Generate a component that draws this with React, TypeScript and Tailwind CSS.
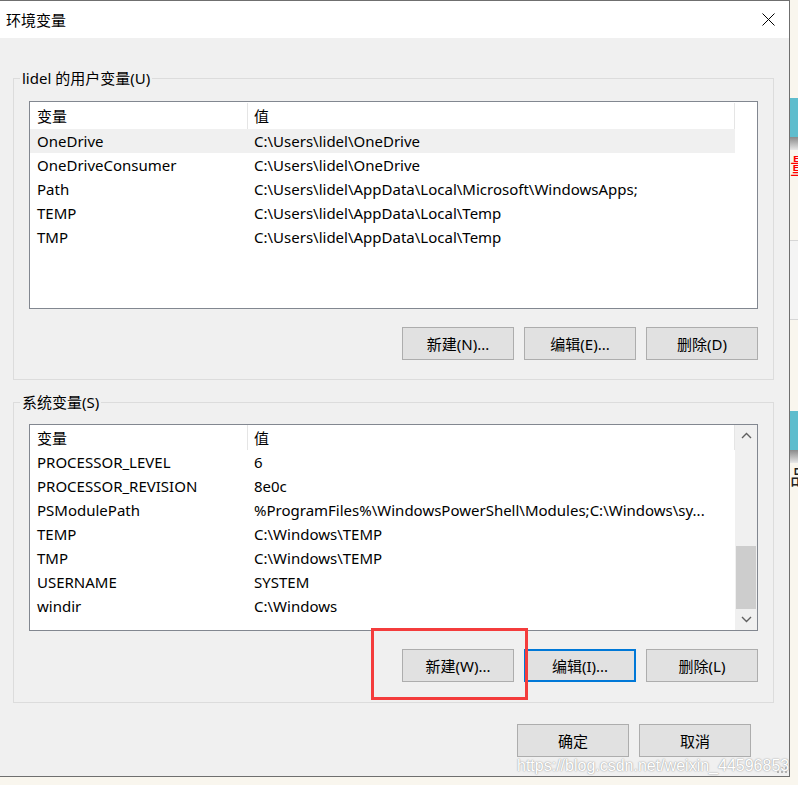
import React from "react";

const userVars = [
  ["OneDrive", "C:\\Users\\lidel\\OneDrive"],
  ["OneDriveConsumer", "C:\\Users\\lidel\\OneDrive"],
  ["Path", "C:\\Users\\lidel\\AppData\\Local\\Microsoft\\WindowsApps;"],
  ["TEMP", "C:\\Users\\lidel\\AppData\\Local\\Temp"],
  ["TMP", "C:\\Users\\lidel\\AppData\\Local\\Temp"],
];

const sysVars = [
  ["PROCESSOR_LEVEL", "6"],
  ["PROCESSOR_REVISION", "8e0c"],
  ["PSModulePath", "%ProgramFiles%\\WindowsPowerShell\\Modules;C:\\Windows\\sy..."],
  ["TEMP", "C:\\Windows\\TEMP"],
  ["TMP", "C:\\Windows\\TEMP"],
  ["USERNAME", "SYSTEM"],
  ["windir", "C:\\Windows"],
];

function Btn({ children, focused }: { children: React.ReactNode; focused?: boolean }) {
  return (
    <div
      className={`w-[112px] h-[33px] flex items-center justify-center bg-[#e1e1e1] text-[15px] leading-[20px] text-black ${
        focused ? "border-2 border-[#0078d7]" : "border border-[#adadad]"
      }`}
    >
      {children}
    </div>
  );
}

function Chevron({ up }: { up?: boolean }) {
  return (
    <svg width="11" height="7" viewBox="0 0 11 7">
      <path
        d={up ? "M1 6 L5.5 1.5 L10 6" : "M1 1 L5.5 5.5 L10 1"}
        fill="none"
        stroke="#606060"
        strokeWidth="1.4"
      />
    </svg>
  );
}

function VarList({
  rows,
  selected,
  scroll,
  height,
  headerClass,
}: {
  rows: string[][];
  selected?: number;
  scroll?: boolean;
  height: string;
  headerClass: string;
}) {
  return (
    <div className={`${height} border border-[#828790] bg-white flex overflow-hidden`}>
      <div className="w-[705px] flex flex-col">
        {/* header */}
        <div className={`flex ${headerClass}`}>
          <div className="w-[218px] pl-[7px] flex items-center border-r border-[#e5e5e5] leading-[20px]">变量</div>
          <div className="w-[487px] pl-[6px] flex items-center border-r border-[#e5e5e5] leading-[20px]">值</div>
        </div>
        {rows.map((r, i) => (
          <div
            key={r[0] + i}
            className={`h-[24px] flex items-center leading-[20px] whitespace-nowrap ${
              selected === i ? "bg-[#f0f0f0]" : ""
            }`}
          >
            <div className="w-[218px] pl-[7px] overflow-hidden">{r[0]}</div>
            <div className="w-[487px] pl-[6px] overflow-hidden">{r[1]}</div>
          </div>
        ))}
      </div>
      {scroll ? (
        <div className="w-[22px] flex flex-col bg-[#f0f0f0]">
          <div className="h-[21px] flex items-center justify-center">
            <Chevron up />
          </div>
          <div className="flex-1 flex flex-col justify-end px-px">
            <div className="h-[63px] bg-[#cdcdcd]" />
          </div>
          <div className="h-[21px] flex items-center justify-center">
            <Chevron />
          </div>
        </div>
      ) : (
        <div className="flex-1" />
      )}
    </div>
  );
}

function Group({
  label,
  className,
  children,
}: {
  label: string;
  className: string;
  children: React.ReactNode;
}) {
  return (
    <div className={`relative border border-[#dcdcdc] px-[15px] ${className}`}>
      <span className="absolute left-[6px] top-[-11px] px-[2px] bg-[#f0f0f0] leading-[20px]">{label}</span>
      {children}
    </div>
  );
}

export default function App() {
  return (
    <div className="relative w-[798px] h-[785px] overflow-hidden flex bg-[#f9f6ee] text-[15px] text-black font-['Noto_Sans','Noto_Sans_CJK_SC',sans-serif]">
      {/* dialog */}
      <div className="w-[790px] h-[777px] shrink-0 flex flex-col bg-[#f0f0f0] border-t border-r border-b border-[#6f6f6f]">
        {/* title bar */}
        <div className="h-[37px] bg-white flex items-center justify-between pl-[6px] pr-[14px]">
          <span className="leading-[20px]">环境变量</span>
          <svg width="13" height="13" viewBox="0 0 13 13">
            <path d="M0.5 0.5 L12.5 12.5 M12.5 0.5 L0.5 12.5" stroke="#000" strokeWidth="1" />
          </svg>
        </div>

        <div className="flex flex-col pl-[13px] pr-[15px] pt-[40px]">
          <Group label="lidel 的用户变量(U)" className="pt-[22px] pb-[19px]">
            <VarList rows={userVars} selected={0} height="h-[208px]" headerClass="h-[27px] pt-px" />
            <div className="mt-[18px] flex justify-end gap-[10px]">
              <Btn>新建(N)...</Btn>
              <Btn>编辑(E)...</Btn>
              <Btn>删除(D)</Btn>
            </div>
          </Group>

          <Group label="系统变量(S)" className="mt-[22px] pt-[21px] pb-[20px]">
            <VarList rows={sysVars} scroll height="h-[207px]" headerClass="h-[25px]" />
            <div className="mt-[18px] flex justify-end gap-[10px]">
              <Btn>新建(W)...</Btn>
              <Btn focused>编辑(I)...</Btn>
              <Btn>删除(L)</Btn>
            </div>
          </Group>

          <div className="mt-[21px] flex justify-end gap-[10px] pr-[23px]">
            <Btn>确定</Btn>
            <Btn>取消</Btn>
          </div>
        </div>
      </div>

      {/* strip of the window behind */}
      <div className="w-[8px] flex flex-col overflow-hidden">
        <div className="h-[98px]" />
        <div className="h-[39px] bg-[#5fbdcd]" />
        <div className="h-[13px] bg-linear-to-b from-[#8a8a8a] to-[#e8e8e8]" />
        <div className="h-[28px] overflow-hidden text-[#ff0000] text-[22px] leading-[28px] font-['Noto_Sans_CJK_SC',sans-serif]">量</div>
        <div className="h-[62px]" />
        <div className="h-px bg-[#d6d6d6]" />
        <div className="h-[78px] bg-[#f4f4f4]" />
        <div className="h-px bg-[#d6d6d6]" />
        <div className="h-[91px]" />
        <div className="h-[39px] bg-[#5fbdcd]" />
        <div className="h-[13px] bg-linear-to-b from-[#8a8a8a] to-[#e8e8e8]" />
        <div className="h-[27px] overflow-hidden text-[#222] text-[20px] leading-[27px] font-['Noto_Sans_CJK_SC',sans-serif]">品</div>
      </div>

      {/* annotation box */}
      <div className="absolute left-[371px] top-[628px] w-[157px] h-[72px] border-[3px] border-[#f43c3c]" />

      {/* resize grip */}
      <svg className="absolute left-[777px] top-[763px]" width="10" height="10" viewBox="0 0 10 10">
        <rect x="8" y="0" width="2" height="2" fill="#b4b4b4" />
        <rect x="4" y="4" width="2" height="2" fill="#b4b4b4" />
        <rect x="8" y="4" width="2" height="2" fill="#b4b4b4" />
        <rect x="0" y="8" width="2" height="2" fill="#b4b4b4" />
        <rect x="4" y="8" width="2" height="2" fill="#b4b4b4" />
        <rect x="8" y="8" width="2" height="2" fill="#b4b4b4" />
      </svg>

      {/* watermark */}
      <div className="absolute left-[517px] top-[756px] whitespace-nowrap text-[16px] leading-[20px] text-white font-['Liberation_Sans',sans-serif] [text-shadow:0_0_1px_#9a9a9a,0_0_2px_#b0b0b0]">
        https://blog.csdn.net/weixin_44596853
      </div>
    </div>
  );
}
